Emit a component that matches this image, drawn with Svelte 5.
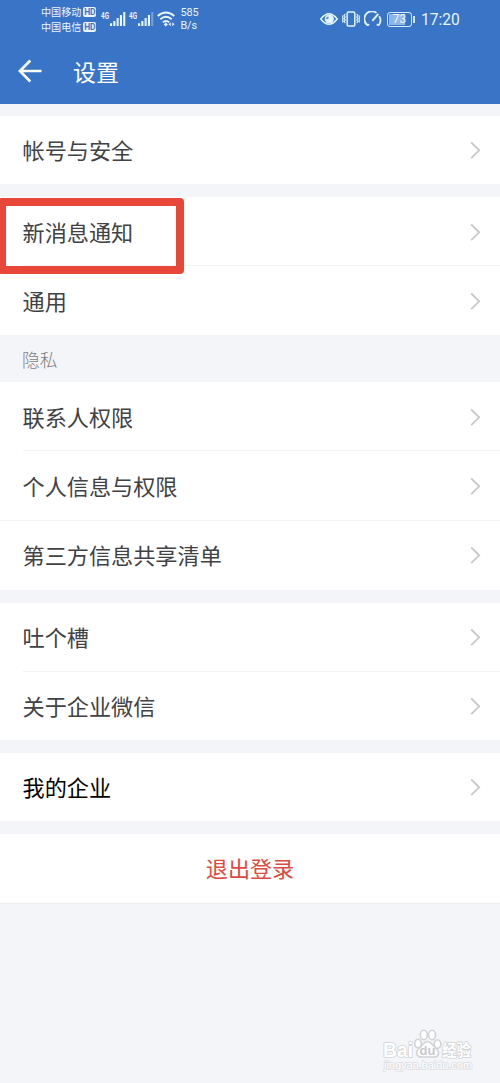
<script>
	const carriers = ['中国移动', '中国电信'];

	const groups = [
		{ height: 68, items: ['帐号与安全'] },
		{ height: 138, items: ['新消息通知', '通用'] },
		{ title: '隐私', height: 208, items: ['联系人权限', '个人信息与权限', '第三方信息共享清单'] },
		{ height: 137, items: ['吐个槽', '关于企业微信'] },
		{ height: 68, strong: true, items: ['我的企业'] },
	];

	const marked = '新消息通知';
</script>

<div class="screen">
	<header>
		<div class="status">
			<div class="carriers">
				{#each carriers as name}
					<div class="carrier">{name}<b>HD</b></div>
				{/each}
			</div>
			{#each [1, 0.35] as last}
				<div class="signal">
					<svg width="25" height="16" viewBox="0 0 25 16" fill="#e9f5ff">
						<text x="0" y="7.500" textLength="8" lengthAdjust="spacingAndGlyphs">4G</text>
						<rect x="9" y="12.3" width="2.1" height="2.7" />
						<rect x="12.3" y="10" width="2.1" height="5" />
						<rect x="15.6" y="7" width="2.1" height="8" />
						<rect x="18.9" y="4" width="2.1" height="11" />
						<rect x="22.2" y="1" width="2.1" height="14" opacity={last} />
					</svg>
				</div>
			{/each}
			<svg class="wifi" width="18" height="16" viewBox="0 0 18 16" fill="none" stroke="#e9f5ff" stroke-width="1.9">
				<path d="M.7 5Q9-2 17.3 5M3.3 8.2Q9 3.5 14.7 8.2M5.8 11.2Q9 8.6 12.2 11.2" />
				<path d="M8.8 11.3l2 2.100-2 2.100-2-2.100z" fill="#e9f5ff" stroke="none" />
				<path d="M11.5 13.3l2.2-2v4zM17.5 13.3l-2.2-2v4z" fill="#e9f5ff" stroke="none" />
			</svg>
			<div class="speed">585<br />B/s</div>

			<div class="right">
				<svg width="18" height="14" viewBox="0 0 18 14" fill="none" stroke="#e2f5ff">
					<path d="M.8 7Q9-3.5 17.2 7Q9 17.5.8 7z" stroke-width="1.6" />
					<circle cx="9.3" cy="7" r="4.6" fill="#e2f5ff" stroke="none" />
					<path d="M8.500 4.500v2.500H6A2.500 2.500 0 0 1 8.500 4.500z" fill="#5b8fd3" stroke="none" />
				</svg>
				<svg class="vibrate" width="18" height="16" viewBox="0 0 18 16" fill="none" stroke="#e2f5ff" stroke-width="1.5">
					<rect x="5.2" y="1" width="7.6" height="14" rx="1.2" />
					<path d="M3.2 3l-1 1.5 1 1.5-1 1.5 1 1.5-1 1.5 1 1.5M.8 4.5v7M14.8 3l1 1.5-1 1.5 1 1.5-1 1.5 1 1.5-1 1.5M17.2 4.5v7" stroke-width="1.2" />
				</svg>
				<svg class="gauge" width="18" height="16" viewBox="0 0 18 16" fill="none" stroke="#e2f5ff" stroke-width="1.8">
					<path d="M5.3 13.6L3.3 14A7.4 7.4 0 0 1 12.5 1.9M15.2 5.3A7.4 7.4 0 0 1 14.7 14L12.7 13.6" />
					<path d="M8.3 9.8L14.3 2.8" stroke-width="2" />
				</svg>
				<div class="battery"><span>73</span></div>
				<time>17:20</time>
			</div>
		</div>
		<div class="bar">
			<svg width="24" height="24" viewBox="0 0 24 24" fill="none" stroke="#fff" stroke-width="2.6">
				<path d="M23.5 12H2M12.3 1.5L1.9 12l10.4 10.5" />
			</svg>
			<h1>设置</h1>
		</div>
	</header>

	<main>
		{#each groups as group}
			{#if group.title}
				<h2>{group.title}</h2>
			{/if}
			<section class:titled={group.title} class:strong={group.strong} style="height: {group.height}px">
				{#each group.items as item}
					<div class="row" class:marked={item === marked}>
						<span>{item}</span>
						<svg width="11" height="18" viewBox="0 0 11 18" fill="none" stroke="#c9c9cb" stroke-width="1.8">
							<path d="M1.2 1.5L9.2 9.3l-8 7.8" />
						</svg>
					</div>
				{/each}
			</section>
		{/each}
		<section class="logout"><span>退出登录</span></section>
	</main>

	<svg class="watermark" width="94" height="46" viewBox="0 0 94 46" fill="#fff" stroke="#d0d2d4" stroke-width="1.6">
		<text class="latin" x="1" y="28.5" textLength="30" lengthAdjust="spacingAndGlyphs">Bai</text>
		<ellipse cx="36" cy="15.500" rx="3.300" ry="4.300" />
		<ellipse cx="41.800" cy="7" rx="3.500" ry="4.700" />
		<ellipse cx="50" cy="7" rx="3.500" ry="4.700" />
		<ellipse cx="55.500" cy="16" rx="3.300" ry="4.300" />
		<path d="M45.500 13.500C41.500 13.500 40.500 17.500 37 20.500C32.500 24.500 35 29.500 40 29H51.500C56.500 29.500 58.500 24.500 54 20.500C50.500 17.500 49.500 13.500 45.500 13.500z" />
		<text class="du" x="45.500" y="27" text-anchor="middle">du</text>
		<text class="cn" x="60" y="27.500" textLength="29" lengthAdjust="spacingAndGlyphs">经验</text>
		<text class="url" x="2" y="41" textLength="88" lengthAdjust="spacingAndGlyphs">jingyan.baidu.com</text>
	</svg>
</div>

<style>
	:global(body) {
		margin: 0;
		background: #f4f5f8;
	}
	.screen {
		position: relative;
		width: 500px;
		height: 1083px;
		overflow: hidden;
		background: #f4f5f8;
		color: #404246;
		font-family: 'Noto Sans CJK SC', sans-serif;
	}
	svg {
		display: block;
		flex: none;
	}
	header {
		height: 104px;
		background: #3974c6;
		color: #fff;
	}
	.status {
		display: flex;
		align-items: flex-start;
		height: 38px;
		padding: 0 40px 0 41px;
		color: #e9f5ff;
	}
	.carriers {
		padding-top: 4px;
	}
	.carrier {
		display: flex;
		align-items: center;
		height: 15px;
		font-size: 10.1px;
		line-height: 15px;
	}
	.carrier b {
		width: 13px;
		height: 10px;
		margin-left: 2px;
		border-radius: 2px;
		background: #e9f5ff;
		color: #3974c6;
		font: bold 8.5px/10px Roboto, sans-serif;
		letter-spacing: -0.2px;
		text-align: center;
	}
	.signal {
		margin: 11px 0 0 5px;
	}
	.signal + .signal {
		margin-left: 3px;
	}
	.signal svg {
		overflow: visible;
	}
	.signal text {
		font: bold 9.5px Roboto, sans-serif;
	}
	.wifi {
		margin: 11px 0 0 3px;
	}
	.speed {
		margin: 7px 0 0 5px;
		font: 10.8px/12.5px Roboto, sans-serif;
	}
	.right {
		display: flex;
		align-items: center;
		height: 16px;
		margin: 11px 0 0 auto;
	}
	.vibrate {
		margin-left: 4px;
	}
	.gauge {
		margin-left: 4px;
	}
	.battery {
		position: relative;
		box-sizing: border-box;
		width: 25px;
		height: 15px;
		margin: 0 9px 0 5px;
		border: 1px solid #d5ebff;
		border-radius: 3px;
		padding: 1px;
	}
	.battery span {
		display: block;
		background: linear-gradient(90deg, #8fb5e6 75%, transparent 75%);
		font: 12px/11px Roboto, sans-serif;
		text-align: center;
	}
	.battery::after {
		content: '';
		position: absolute;
		top: 3px;
		right: -4px;
		width: 2px;
		height: 7px;
		background: #d5ebff;
	}
	time {
		width: 39px;
		padding-top: 2px;
		font: 15.6px/17px Roboto, sans-serif;
		white-space: nowrap;
	}
	.bar {
		display: flex;
		align-items: center;
		height: 66px;
		padding-left: 18px;
	}
	h1 {
		margin: 0 0 1px 31px;
		font-size: 23px;
		font-weight: 400;
		line-height: 34px;
	}
	h2 {
		height: 47px;
		margin: 0;
		padding-left: 22px;
		color: #7d7f84;
		font-size: 17.7px;
		font-weight: 300;
		line-height: 48px;
	}
	section {
		display: flex;
		flex-direction: column;
		margin-top: 13px;
		background: #fff;
	}
	section:first-child {
		margin-top: 12px;
	}
	section.titled {
		margin-top: 0;
	}
	.row {
		position: relative;
		display: flex;
		flex: 1;
		align-items: center;
		justify-content: space-between;
		margin-left: 22.5px;
		padding-right: 19px;
		font-size: 22.15px;
		line-height: 32px;
	}
	.row span {
		padding-bottom: 2px;
	}
	.row + .row {
		box-shadow: 0 -1px #f3f3f4;
	}
	.titled .row:last-child {
		margin-left: 0;
		padding-left: 22.5px;
	}
	.marked::before {
		content: '';
		position: absolute;
		top: 0.5px;
		left: -25px;
		box-sizing: border-box;
		width: 186.5px;
		height: 76px;
		border: 8px solid #e74639;
		border-radius: 4px;
		z-index: 1;
	}
	.strong {
		color: #000;
	}
	.logout {
		height: 69px;
		color: #dc4b42;
		font-size: 22.1px;
		line-height: 66px;
		text-align: center;
		box-shadow: 0 1px #ececef;
	}
	.watermark {
		position: absolute;
		left: 382px;
		top: 1028px;
	}
	.watermark text {
		paint-order: stroke;
		stroke-linejoin: round;
	}
	.latin {
		font: bold 20px 'Liberation Sans', sans-serif;
	}
	.watermark .du {
		fill: #c6c8ca;
		stroke: none;
		font: bold 13px 'Liberation Sans', sans-serif;
	}
	.cn {
		font: bold 16px 'Noto Sans CJK SC', sans-serif;
	}
	.url {
		stroke: #dcdee0;
		font: 11px 'Liberation Sans', sans-serif;
	}
</style>
